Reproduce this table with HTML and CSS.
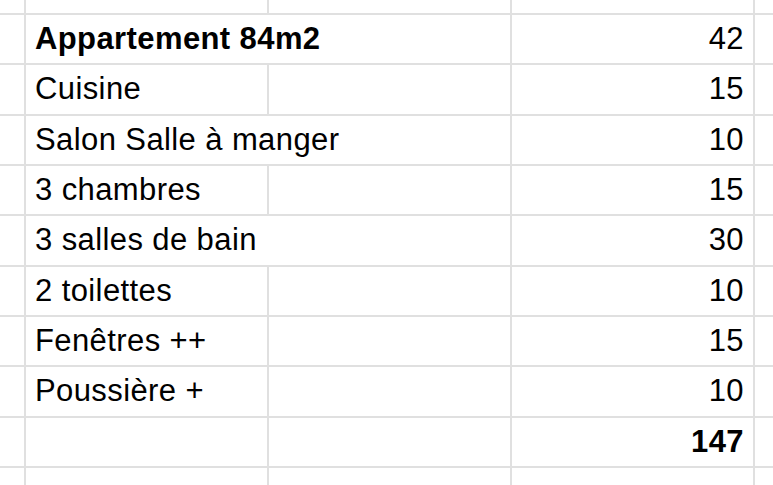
FILE: index.html
```html
<!DOCTYPE html>
<html lang="fr">
<head>
<meta charset="utf-8">
<link rel="stylesheet" href="styles.css">
</head>
<body>
<div class="sheet">
  <div class="c"></div><div class="c"></div><div class="c"></div><div class="c"></div><div class="c"></div>

  <div class="c"></div><div class="c t b span">Appartement 84m2</div><div class="c n">42</div><div class="c"></div>
  <div class="c"></div><div class="c t">Cuisine</div><div class="c"></div><div class="c n">15</div><div class="c"></div>
  <div class="c"></div><div class="c t span">Salon Salle à manger</div><div class="c n">10</div><div class="c"></div>
  <div class="c"></div><div class="c t">3 chambres</div><div class="c"></div><div class="c n">15</div><div class="c"></div>
  <div class="c"></div><div class="c t span">3 salles de bain</div><div class="c n">30</div><div class="c"></div>
  <div class="c"></div><div class="c t">2 toilettes</div><div class="c"></div><div class="c n">10</div><div class="c"></div>
  <div class="c"></div><div class="c t">Fenêtres ++</div><div class="c"></div><div class="c n">15</div><div class="c"></div>
  <div class="c"></div><div class="c t">Poussière +</div><div class="c"></div><div class="c n">10</div><div class="c"></div>
  <div class="c"></div><div class="c"></div><div class="c"></div><div class="c n b">147</div><div class="c"></div>

  <div class="c"></div><div class="c"></div><div class="c"></div><div class="c"></div><div class="c"></div>
</div>
</body>
</html>
```

FILE: styles.css
```css
html, body {
  margin: 0;
  padding: 0;
  background: #ffffff;
  overflow: hidden;
}
.sheet {
  width: 773px;
  height: 485px;
  display: grid;
  grid-template-columns: 24px 241px 241px 241px 1fr;
  grid-template-rows: 13px repeat(9, 48.33px) 1fr;
  gap: 2px;
  background: #e0e0e0;
  font-family: "Liberation Sans", Arial, sans-serif;
  font-size: 31px;
  letter-spacing: 0.4px;
  color: #000;
}
.c {
  background: #ffffff;
  display: flex;
  align-items: center;
  white-space: nowrap;
  overflow: hidden;
}
.t {
  padding-left: 9px;
}
.n {
  justify-content: flex-end;
  padding-right: 9px;
}
.b {
  font-weight: bold;
}
.span {
  grid-column: span 2;
}
```
